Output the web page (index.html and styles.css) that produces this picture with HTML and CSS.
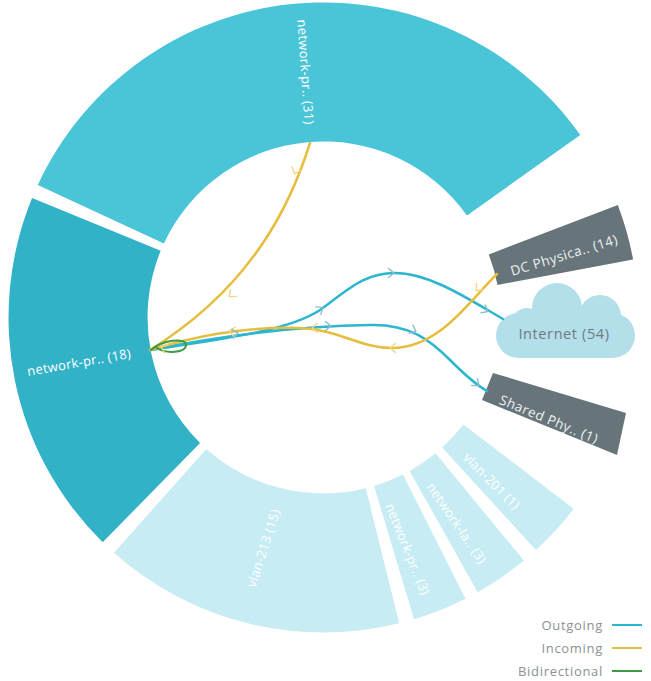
FILE: index.html
```html
<!DOCTYPE html>
<html lang="en">
<head>
<meta charset="utf-8">
<title>Network flow ring</title>
<link rel="stylesheet" href="styles.css">
</head>
<body>
<div class="chart">
  <svg class="ring" width="651" height="681" viewBox="0 0 651 681" xmlns="http://www.w3.org/2000/svg">
    <!-- ring segments -->
    <path class="seg seg-main" d="M37.8,184.9 A315,315 0 0 1 580.3,135 L467,215.5 A176,176 0 0 0 163.9,243.4 Z"/>
    <path class="seg seg-focus" d="M102.7,542.2 A315,315 0 0 1 32.1,198 L160.7,250.7 A176,176 0 0 0 200.1,443 Z"/>
    <path class="seg seg-light" d="M399.2,623.3 A315,315 0 0 1 114,552.7 L206.4,448.9 A176,176 0 0 0 365.8,488.3 Z"/>
    <path class="seg seg-light" d="M465.5,598.7 A315,315 0 0 1 414,619.2 L374.1,486.1 A176,176 0 0 0 402.9,474.6 Z"/>
    <path class="seg seg-light" d="M523.9,560.6 A315,315 0 0 1 477.7,592.2 L409.6,471 A176,176 0 0 0 435.5,453.3 Z"/>
    <path class="seg seg-light" d="M573.7,508.8 A315,315 0 0 1 535.9,550.1 L442.2,447.5 A176,176 0 0 0 463.3,424.4 Z"/>

    <!-- external nodes -->
    <path class="ext" d="M617.8,205.1 A315,315 0 0 1 633.1,259.5 L497.5,284.9 A177,177 0 0 0 488.8,254.4 Z"/>
    <path class="ext" d="M493,373 L626,413 L617,455 L482,400 Z"/>
    <g class="cloud">
      <rect x="496" y="313" width="139" height="45" rx="22.5"/>
      <circle cx="557" cy="308" r="25"/>
      <circle cx="600" cy="316" r="21"/>
      <circle cx="527" cy="324" r="16"/>
    </g>

    <!-- links -->
    <path class="link in" d="M310,143 C292,200 255,285 150,350"/>
    <path class="link out" d="M150,350 C230,338 290,330 320,310 C350,288 365,273 395,273 C430,273 470,300 503,319"/>
    <path class="link out" d="M150,350 C220,336 300,326 370,325 C410,324 430,340 450,360 C465,375 478,386 487,391"/>
    <path class="link in" d="M497,274 C470,300 440,348 392,348 C360,348 340,330 300,328 C240,326 190,338 150,350"/>
    <path class="link bi" d="M151,350 C162,340 186,337 186,345 C186,353 166,354 157,348"/>

    <!-- direction chevrons -->
    <g class="chev chev-in">
      <path transform="translate(295,173) rotate(110)" d="M-4.5,-4.5 L1,0 L-4.5,4.5"/>
      <path transform="translate(230,296) rotate(138)" d="M-4.5,-4.5 L1,0 L-4.5,4.5"/>
      <path transform="translate(477,290) rotate(130)" d="M-4.5,-4.5 L1,0 L-4.5,4.5"/>
      <path transform="translate(391,348) rotate(180)" d="M-4.5,-4.5 L1,0 L-4.5,4.5"/>
      <path transform="translate(313,328) rotate(178)" d="M-4.5,-4.5 L1,0 L-4.5,4.5"/>
      <path transform="translate(230,331) rotate(190)" d="M-4.5,-4.5 L1,0 L-4.5,4.5"/>
      <path transform="translate(162,347) rotate(200)" d="M-4.5,-4.5 L1,0 L-4.5,4.5"/>
    </g>
    <g class="chev chev-out">
      <path transform="translate(237,333) rotate(-10)" d="M-4.5,-4.5 L1,0 L-4.5,4.5"/>
      <path transform="translate(322,308) rotate(-35)" d="M-4.5,-4.5 L1,0 L-4.5,4.5"/>
      <path transform="translate(393,273) rotate(0)" d="M-4.5,-4.5 L1,0 L-4.5,4.5"/>
      <path transform="translate(487,311) rotate(28)" d="M-4.5,-4.5 L1,0 L-4.5,4.5"/>
      <path transform="translate(330,326) rotate(0)" d="M-4.5,-4.5 L1,0 L-4.5,4.5"/>
      <path transform="translate(415,331) rotate(25)" d="M-4.5,-4.5 L1,0 L-4.5,4.5"/>
      <path transform="translate(478,385) rotate(40)" d="M-4.5,-4.5 L1,0 L-4.5,4.5"/>
    </g>

    <!-- labels -->
    <text class="lbl" transform="translate(306,72) rotate(86)">network-pr.. (31)</text>
    <text class="lbl" transform="translate(79,362) rotate(-10)">network-pr.. (18)</text>
    <text class="lbl" transform="translate(263,548) rotate(-72)">vlan-213 (15)</text>
    <text class="lbl" transform="translate(408,549) rotate(68)">network-pr.. (3)</text>
    <text class="lbl" transform="translate(457,523) rotate(55.5)">network-la.. (3)</text>
    <text class="lbl" transform="translate(492,481) rotate(45)">vlan-201 (1)</text>
    <text class="lbl lbl-ext" transform="translate(564,255) rotate(-17)">DC Physica.. (14)</text>
    <text class="lbl lbl-ext" transform="translate(549,419) rotate(22.5)">Shared Phy.. (1)</text>
    <text class="lbl lbl-cloud" x="564" y="333">Internet (54)</text>
  </svg>

  <ul class="legend">
    <li class="legend-item"><span class="legend-text">Outgoing</span><span class="legend-swatch sw-out"></span></li>
    <li class="legend-item"><span class="legend-text">Incoming</span><span class="legend-swatch sw-in"></span></li>
    <li class="legend-item"><span class="legend-text">Bidirectional</span><span class="legend-swatch sw-bi"></span></li>
  </ul>
</div>
</body>
</html>
```
FILE: styles.css
```css
* { box-sizing: border-box; }

html, body {
  margin: 0;
  padding: 0;
  background: #ffffff;
}

body {
  font-family: "Open Sans", "Noto Sans", "Liberation Sans", sans-serif;
}

.chart {
  position: relative;
  width: 651px;
  height: 681px;
  overflow: hidden;
}

.ring {
  display: block;
}

.seg-main { fill: #4ac4d7; }
.seg-focus { fill: #32b2c7; }
.seg-light { fill: #c7ecf3; }

.ext { fill: #67757a; }

.cloud rect,
.cloud circle { fill: #b3dfea; }

.link {
  fill: none;
  stroke-width: 2.5;
  stroke-linecap: round;
}
.link.in { stroke: #e6be3f; }
.link.out { stroke: #2cb6cf; }
.link.bi { stroke: #3e9a44; stroke-width: 2; }

.chev path {
  fill: none;
  stroke-width: 1.4;
  stroke-linecap: round;
  stroke-linejoin: round;
}
.chev-in path { stroke: #f1d780; }
.chev-out path { stroke: #8fbccb; }

.lbl {
  font-family: "Open Sans", "Noto Sans", sans-serif;
  font-size: 13px;
  letter-spacing: 0.3px;
  fill: #ffffff;
  text-anchor: middle;
  dominant-baseline: central;
}
.lbl-ext { fill: #eef1f2; font-size: 13.5px; letter-spacing: 0.5px; }
.lbl-cloud { fill: #6d7c82; font-size: 14.5px; letter-spacing: 0.6px; }

.legend {
  position: absolute;
  right: 9px;
  top: 613px;
  margin: 0;
  padding: 0;
  list-style: none;
  display: flex;
  flex-direction: column;
  align-items: flex-end;
}

.legend-item {
  display: flex;
  align-items: center;
  gap: 9px;
  height: 23px;
}

.legend-text {
  font-size: 13px;
  letter-spacing: 0.7px;
  color: #8b9194;
}

.legend-swatch {
  display: block;
  width: 30px;
  height: 2px;
}
.sw-out { background: #2cb6cf; }
.sw-in { background: #e6be3f; }
.sw-bi { background: #3e9a44; }
```
